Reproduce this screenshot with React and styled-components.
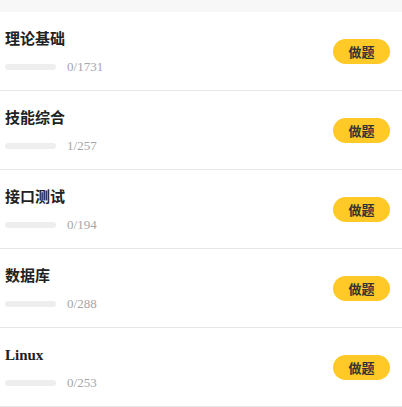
import React from "react";
import styled, { createGlobalStyle } from "styled-components";

const GlobalStyle = createGlobalStyle`
  html, body {
    margin: 0;
    padding: 0;
    background: #ffffff;
  }
  body {
    font-family: "Liberation Serif", "Noto Sans CJK SC", serif;
  }
`;

const TRACK_WIDTH = 51;

const Page = styled.div`
  width: 402px;
  min-height: 407px;
  background: #ffffff;
`;

const TopBand = styled.div`
  height: 12px;
  background: #f7f7f7;
`;

const List = styled.div`
  display: flex;
  flex-direction: column;
`;

const Row = styled.div`
  height: 78px;
  display: flex;
  align-items: center;
  justify-content: space-between;
  padding: 0 12px 0 5px;
  border-bottom: 1px solid #e6e6e6;
`;

const Info = styled.div`
  display: flex;
  flex-direction: column;
  gap: 11px;
  padding-top: 3px;
`;

const Title = styled.div`
  font-family: "Liberation Serif", "Noto Sans CJK SC", serif;
  font-size: 15px;
  font-weight: 700;
  color: #222;
  line-height: 18px;
`;

const ProgressLine = styled.div`
  display: flex;
  align-items: center;
  gap: 11px;
`;

const Track = styled.div`
  width: ${TRACK_WIDTH}px;
  height: 6px;
  border-radius: 3px;
  background: #eeeeee;
  overflow: hidden;
`;

const Fill = styled.div`
  height: 100%;
  background: #ffc927;
`;

const Count = styled.span`
  font-family: "Liberation Serif", serif;
  font-size: 13px;
  color: #a6a6a6;
`;

const DoButton = styled.button`
  width: 57px;
  height: 25px;
  border: none;
  border-radius: 13px;
  background: #ffc927;
  color: #333;
  font-family: "Noto Sans CJK SC", sans-serif;
  font-size: 13px;
  font-weight: 700;
  padding: 0;
  margin-top: 1px;
  cursor: pointer;
`;

const subjects = [
  { name: "理论基础", done: 0, total: 1731 },
  { name: "技能综合", done: 1, total: 257 },
  { name: "接口测试", done: 0, total: 194 },
  { name: "数据库", done: 0, total: 288 },
  { name: "Linux", done: 0, total: 253 },
];

export default function App() {
  return (
    <Page>
      <GlobalStyle />
      <TopBand />
      <List>
        {subjects.map((s) => (
          <Row key={s.name}>
            <Info>
              <Title>{s.name}</Title>
              <ProgressLine>
                <Track>
                  <Fill
                    style={{
                      width: `${Math.round((TRACK_WIDTH * s.done) / s.total)}px`,
                    }}
                  />
                </Track>
                <Count>
                  {s.done}/{s.total}
                </Count>
              </ProgressLine>
            </Info>
            <DoButton>做题</DoButton>
          </Row>
        ))}
      </List>
    </Page>
  );
}
